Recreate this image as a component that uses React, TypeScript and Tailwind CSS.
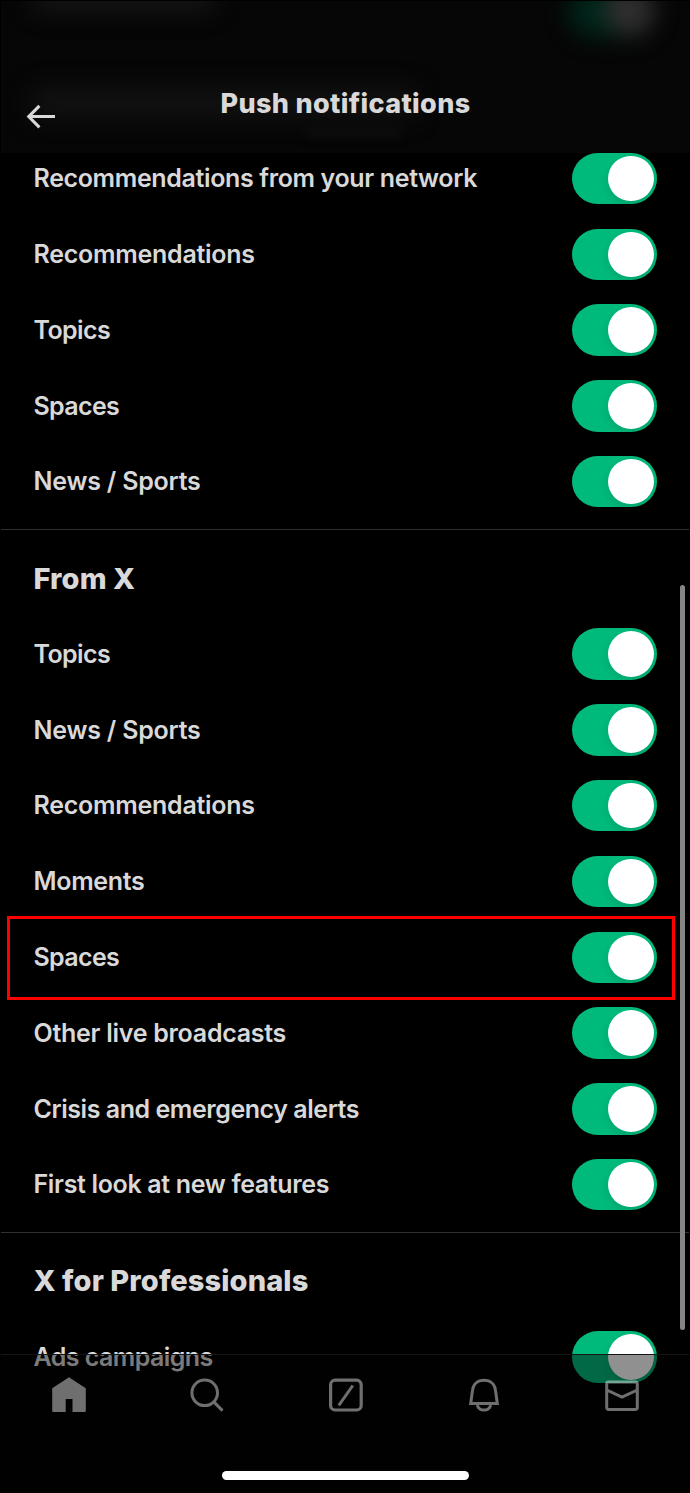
import clsx from "clsx";

type Row = { label: string; tracking: string; highlighted?: boolean };

const networkRows: Row[] = [
  { label: "Recommendations from your network", tracking: "tracking-[-0.36px]" },
  { label: "Recommendations", tracking: "tracking-[-0.26px]" },
  { label: "Topics", tracking: "tracking-[-0.6px]" },
  { label: "Spaces", tracking: "tracking-[-0.65px]" },
  { label: "News / Sports", tracking: "tracking-[-0.22px]" },
];

const fromXRows: Row[] = [
  { label: "Topics", tracking: "tracking-[-0.6px]" },
  { label: "News / Sports", tracking: "tracking-[-0.22px]" },
  { label: "Recommendations", tracking: "tracking-[-0.26px]" },
  { label: "Moments", tracking: "tracking-[-0.32px]" },
  { label: "Spaces", tracking: "tracking-[-0.65px]", highlighted: true },
  { label: "Other live broadcasts", tracking: "tracking-[-0.28px]" },
  { label: "Crisis and emergency alerts", tracking: "tracking-[-0.45px]" },
  { label: "First look at new features", tracking: "tracking-[-0.34px]" },
];

const professionalRows: Row[] = [
  { label: "Ads campaigns", tracking: "tracking-[-0.56px]" },
];

const Toggle = () => (
  <button
    role="switch"
    aria-checked="true"
    className="flex h-[51.5px] w-[85px] shrink-0 items-center justify-end overflow-hidden rounded-full bg-[#00ba7c] pr-[3px]"
  >
    <span className="size-[45.5px] rounded-full bg-white shadow-[0_4px_10px_rgba(0,0,0,0.12)]" />
  </button>
);

const SettingRow = ({ label, tracking, highlighted }: Row) => (
  <div className="relative flex h-[75.8px] items-center justify-between pr-[33.5px] pl-[33.5px]">
    <span className={clsx("pt-px text-[25px] font-[640] whitespace-nowrap", tracking)}>
      {label}
    </span>
    <Toggle />
    {highlighted && (
      <div className="absolute -top-[3px] right-[15px] -bottom-[5px] left-[7px] border-3 border-[#ff0000]" />
    )}
  </div>
);

const Section = ({ title, rows }: { title?: string; rows: Row[] }) => (
  <section className={clsx(title && "mx-px mt-[9.8px] border-t border-[#2f2f2f] pt-[10px]")}>
    {title && (
      <h2 className="flex h-[75.8px] items-center pl-[32.5px] text-[29px] font-[760] tracking-[0.1px]">
        {title}
      </h2>
    )}
    <div className={clsx(title && "-mx-px")}>
      {rows.map((row) => (
        <SettingRow key={row.label} {...row} />
      ))}
    </div>
  </section>
);

const HomeIcon = () => (
  <svg width="36" height="36" viewBox="0 0 36 36" fill="currentColor">
    <path d="M18 .2 34.8 11.2v22.6c0 .8-.5 1.2-1.2 1.2H21.5V22h-6.8v13H2.4c-.7 0-1.2-.4-1.2-1.2V11.2z" />
  </svg>
);

const SearchIcon = () => (
  <svg width="36" height="36" viewBox="0 0 36 36" fill="none" stroke="currentColor" strokeWidth="3">
    <circle cx="15.7" cy="15.8" r="12.8" />
    <path d="m24.8 24.9 8.7 8.7" />
  </svg>
);

const GrokIcon = () => (
  <svg width="36" height="36" viewBox="0 0 36 36" fill="none" stroke="currentColor" strokeWidth="3.2">
    <rect x="2.6" y="3.2" width="30.6" height="29.8" rx="4.5" />
    <path d="M10.8 28.3 24.8 8.5" strokeWidth="3" />
  </svg>
);

const BellIcon = () => (
  <svg width="36" height="36" viewBox="0 0 36 36" fill="none" stroke="currentColor" strokeWidth="3">
    <path d="M4.7 26.6 6.4 14C7 7.3 11.7 3.3 18 3.3s11 4 11.6 10.7l1.7 12.6z" />
    <path d="M11.3 28.1c.8 3 3.2 5 6.7 5s5.9-2 6.7-5" />
  </svg>
);

const MailIcon = () => (
  <svg width="36" height="36" viewBox="0 0 36 36" fill="none" stroke="currentColor" strokeWidth="3">
    <path d="M4.5 4.9h27a1.8 1.8 0 0 1 1.8 1.8v23.9a1.8 1.8 0 0 1-1.8 1.8h-27a1.8 1.8 0 0 1-1.8-1.8V6.7a1.8 1.8 0 0 1 1.8-1.8zM2.7 13 18 20.2 33.3 13" />
  </svg>
);

const Header = () => (
  <header className="absolute inset-x-px top-px z-10 flex h-[152px] items-start overflow-hidden bg-[#060606]">
    {/* rows scrolled behind the bar */}
    <div className="absolute -top-3 left-[32px] h-[20px] w-[180px] bg-[#191919] blur-[12px]" />
    <div className="absolute top-[88px] left-[32px] h-[28px] w-[380px] bg-[#131313] blur-[12px]" />
    <div className="absolute top-[126px] left-[305px] h-[10px] w-[95px] bg-[#0d0d0d] blur-[4px]" />
    <div className="absolute -top-[16px] left-[567px] flex h-[52px] w-[87px] justify-end rounded-full bg-[#00251a] blur-[11px]">
      <span className="size-[50px] rounded-full bg-[#302e2e]" />
    </div>
    <svg
      className="relative mt-[101px] ml-[25px]"
      width="30"
      height="28"
      viewBox="0 0 30 28"
      fill="none"
      stroke="#d9d9d9"
      strokeWidth="3"
    >
      <path d="M13.4 3.9 2.7 14.6l10.7 10.8M2.4 14.6H29" />
    </svg>
    <h1 className="relative mt-[85px] ml-[164.5px] text-[27px]/[36px] font-[780] tracking-[0.35px] whitespace-nowrap">
      Push notifications
    </h1>
  </header>
);

const TabBar = () => (
  <nav className="absolute inset-x-px bottom-0 z-10 h-[139px] border-t border-[#151515] bg-[rgba(3,3,3,0.44)]">
    <div className="flex justify-between pt-[22px] pr-[49px] pl-[50px] text-white opacity-[0.43]">
      <HomeIcon />
      <SearchIcon />
      <GrokIcon />
      <BellIcon />
      <MailIcon />
    </div>
    <div className="mx-auto mt-[58px] h-[9px] w-[247px] rounded-full bg-white" />
  </nav>
);

export default function App() {
  return (
    <div className="relative h-[1493px] w-[690px] overflow-hidden bg-black font-['Inter',sans-serif] text-[#d9d9d9]">
      <Header />
      <main className="pt-[140.6px]">
        <Section rows={networkRows} />
        <Section title="From X" rows={fromXRows} />
        <Section title="X for Professionals" rows={professionalRows} />
      </main>
      <div className="absolute top-[585px] right-[5px] h-[745px] w-[5px] rounded-full bg-[#858585]" />
      <TabBar />
    </div>
  );
}
